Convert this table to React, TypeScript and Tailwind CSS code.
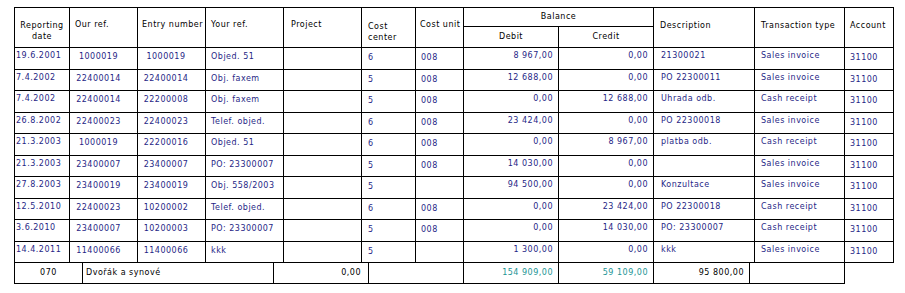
type Row = {
  date: string;
  ourRef: string;
  entry: string;
  yourRef: string;
  center: string;
  unit: string;
  debit: string;
  credit: string;
  desc: string;
  type: string;
  account: string;
};

const rows: Row[] = [
  { date: "19.6.2001", ourRef: "1000019", entry: "1000019", yourRef: "Objed. 51", center: "6", unit: "008", debit: "8 967,00", credit: "0,00", desc: "21300021", type: "Sales invoice", account: "31100" },
  { date: "7.4.2002", ourRef: "22400014", entry: "22400014", yourRef: "Obj. faxem", center: "5", unit: "008", debit: "12 688,00", credit: "0,00", desc: "PO 22300011", type: "Sales invoice", account: "31100" },
  { date: "7.4.2002", ourRef: "22400014", entry: "22200008", yourRef: "Obj. faxem", center: "5", unit: "008", debit: "0,00", credit: "12 688,00", desc: "Uhrada odb.", type: "Cash receipt", account: "31100" },
  { date: "26.8.2002", ourRef: "22400023", entry: "22400023", yourRef: "Telef. objed.", center: "6", unit: "008", debit: "23 424,00", credit: "0,00", desc: "PO 22300018", type: "Sales invoice", account: "31100" },
  { date: "21.3.2003", ourRef: "1000019", entry: "22200016", yourRef: "Objed. 51", center: "6", unit: "008", debit: "0,00", credit: "8 967,00", desc: "platba odb.", type: "Cash receipt", account: "31100" },
  { date: "21.3.2003", ourRef: "23400007", entry: "23400007", yourRef: "PO: 23300007", center: "5", unit: "008", debit: "14 030,00", credit: "0,00", desc: "", type: "Sales invoice", account: "31100" },
  { date: "27.8.2003", ourRef: "23400019", entry: "23400019", yourRef: "Obj. 558/2003", center: "5", unit: "", debit: "94 500,00", credit: "0,00", desc: "Konzultace", type: "Sales invoice", account: "31100" },
  { date: "12.5.2010", ourRef: "22400023", entry: "10200002", yourRef: "Telef. objed.", center: "6", unit: "008", debit: "0,00", credit: "23 424,00", desc: "PO 22300018", type: "Cash receipt", account: "31100" },
  { date: "3.6.2010", ourRef: "23400007", entry: "10200003", yourRef: "PO: 23300007", center: "5", unit: "008", debit: "0,00", credit: "14 030,00", desc: "PO: 23300007", type: "Cash receipt", account: "31100" },
  { date: "14.4.2011", ourRef: "11400066", entry: "11400066", yourRef: "kkk", center: "5", unit: "", debit: "1 300,00", credit: "0,00", desc: "kkk", type: "Sales invoice", account: "31100" },
];

// row heights including the bottom rule
const heights = ["h-[22px]", "h-[21px]", "h-[22px]", "h-[21px]", "h-[22px]", "h-[21px]", "h-[22px]", "h-[21px]", "h-[22px]", "h-[21px]"];

const cell = "shrink-0 border-r border-b border-black whitespace-nowrap overflow-hidden";

export default function App() {
  return (
    <div className="min-h-[293px] w-[905px] bg-white pl-[14px] pt-[7px] font-['DejaVu_Sans',Verdana,sans-serif] text-[8px] leading-[10px] tracking-[0.5px] text-black">
      <div className="flex w-[880px] flex-col border-l border-t border-black">
        {/* header */}
        <div className="flex h-[40px]">
          <div className={`${cell} w-[55px] pt-[12px] text-center leading-[11px]`}>
            Reporting
            <br />
            date
          </div>
          <div className={`${cell} w-[68px] pl-[5px] pt-[12px]`}>Our ref.</div>
          <div className={`${cell} w-[68px] pl-[4px] pt-[12px]`}>Entry number</div>
          <div className={`${cell} w-[78px] pl-[5px] pt-[12px]`}>Your ref.</div>
          <div className={`${cell} w-[78px] pl-[7px] pt-[12px]`}>Project</div>
          <div className={`${cell} w-[54px] pl-[6px] pt-[13px] leading-[11px]`}>
            Cost
            <br />
            center
          </div>
          <div className={`${cell} w-[48px] pl-[4px] pt-[12px]`}>Cost unit</div>
          <div className="flex w-[190px] shrink-0 flex-col">
            <div className="flex h-[19px] items-center justify-center border-r border-b border-black">Balance</div>
            <div className="flex h-[21px]">
              <div className={`${cell} flex w-[95px] items-center justify-center`}>Debit</div>
              <div className={`${cell} flex w-[95px] items-center justify-center`}>Credit</div>
            </div>
          </div>
          <div className={`${cell} w-[101px] pl-[6px] pt-[13px]`}>Description</div>
          <div className={`${cell} w-[90px] pl-[6px] pt-[13px]`}>Transaction type</div>
          <div className={`${cell} w-[49px] pl-[5px] pt-[13px]`}>Account</div>
        </div>

        {/* data rows */}
        {rows.map((r, i) => (
          <div key={i} className={`flex ${heights[i]} text-[#1f1f86]`}>
            <div className={`${cell} w-[55px] pl-[1px] pt-[3px]`}>{r.date}</div>
            <div className={`${cell} w-[68px] pr-[10px] pt-[4px] text-center`}>{r.ourRef}</div>
            <div className={`${cell} w-[68px] pr-[11px] pt-[4px] text-center`}>{r.entry}</div>
            <div className={`${cell} w-[78px] pl-[5px] pt-[4px]`}>{r.yourRef}</div>
            <div className={`${cell} w-[78px]`} />
            <div className={`${cell} w-[54px] pl-[6px] pt-[5px]`}>{r.center}</div>
            <div className={`${cell} w-[48px] pl-[5px] pt-[5px]`}>{r.unit}</div>
            <div className={`${cell} w-[95px] pr-[5px] pt-[3px] text-right`}>{r.debit}</div>
            <div className={`${cell} w-[95px] pr-[5px] pt-[3px] text-right`}>{r.credit}</div>
            <div className={`${cell} w-[101px] pl-[7px] pt-[3px]`}>{r.desc}</div>
            <div className={`${cell} w-[90px] pl-[6px] pt-[3px]`}>{r.type}</div>
            <div className={`${cell} w-[49px] pl-[5px] pt-[5px]`}>{r.account}</div>
          </div>
        ))}

        {/* totals */}
        <div className="flex h-[21px]">
          <div className={`${cell} flex w-[68px] items-center justify-center`}>070</div>
          <div className={`${cell} flex w-[191px] items-center pl-[3px]`}>Dvořák a synové</div>
          <div className={`${cell} flex w-[95px] items-center justify-end pr-[7px]`}>0,00</div>
          <div className={`${cell} w-[95px]`} />
          <div className={`${cell} flex w-[95px] items-center justify-end pr-[5px] text-[#1a9494]`}>154 909,00</div>
          <div className={`${cell} flex w-[95px] items-center justify-end pr-[5px] text-[#1a9494]`}>59 109,00</div>
          <div className={`${cell} flex w-[96px] items-center justify-end pr-[5px]`}>95 800,00</div>
          <div className={`${cell} w-[95px]`} />
        </div>
      </div>
    </div>
  );
}
